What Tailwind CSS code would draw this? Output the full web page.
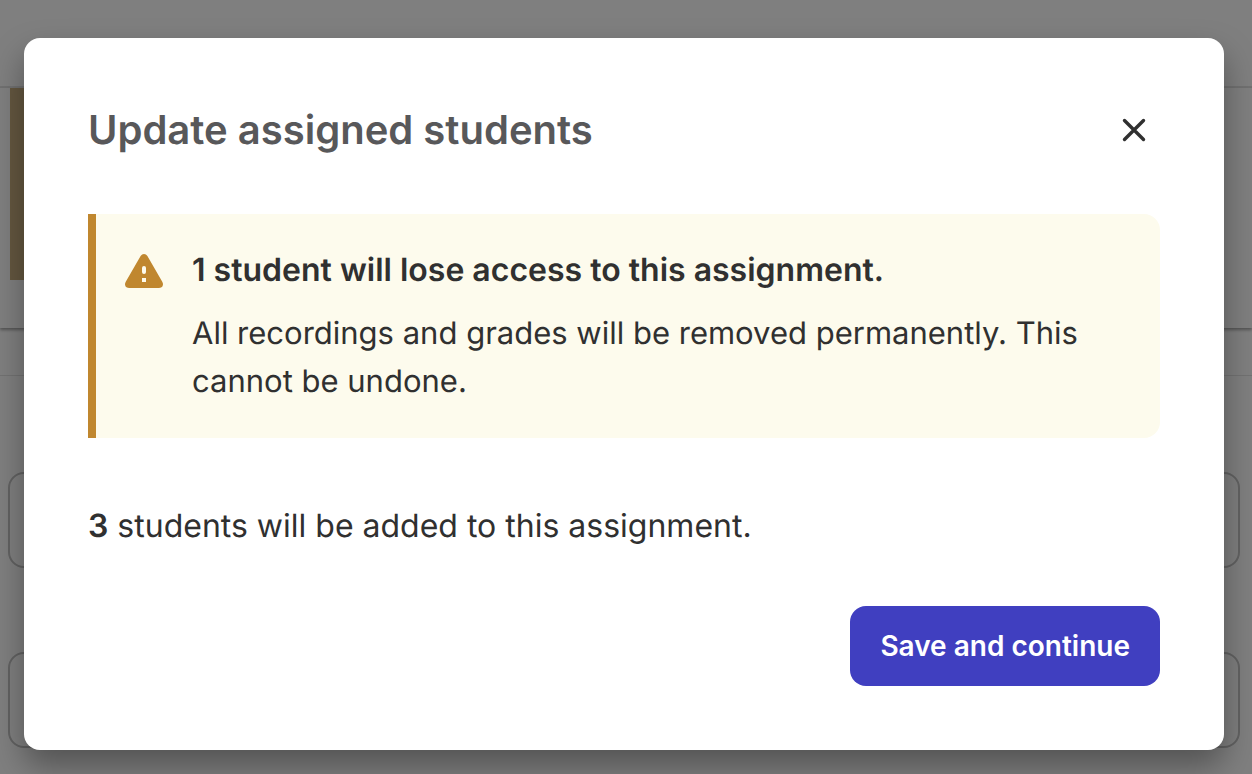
<!DOCTYPE html>
<html lang="en">
<head>
<meta charset="utf-8">
<meta name="viewport" content="width=device-width, initial-scale=1">
<title>Update assigned students</title>
<script src="https://cdn.jsdelivr.net/npm/@tailwindcss/browser@4"></script>
</head>
<body class="relative min-h-screen overflow-hidden bg-white font-['Inter',sans-serif] text-[#303030] antialiased [text-rendering:geometricPrecision]">
  <!-- Page behind the dialog -->
  <div aria-hidden="true" class="flex flex-col">
    <div class="h-22 border-b-2 border-[#e4e4e4]"></div>
    <div class="h-60 pl-2.5 shadow-[0_2px_3px_rgba(0,0,0,0.35)]">
      <div class="h-48 w-48 bg-[#c9ae80]"></div>
    </div>
    <div class="h-12 border-b border-[#e4e4e4]"></div>
    <div class="flex flex-col gap-21 px-2 pr-3 pt-24">
      <div class="h-24 rounded-2xl border-2 border-[#c4c4c4]"></div>
      <div class="h-24 rounded-2xl border-2 border-[#c4c4c4]"></div>
    </div>
  </div>

  <div class="absolute inset-0 bg-black/50 pt-[38px] pr-7 pb-6 pl-6">
    <section role="dialog" aria-modal="true" aria-labelledby="dialog-title" class="flex flex-col rounded-2xl bg-white p-16 shadow-[0_16px_32px_rgba(0,0,0,0.35)]">
      <header class="flex items-center justify-between pr-2">
        <h1 id="dialog-title" class="text-[40px] leading-14 font-semibold text-[#58585a]">Update assigned students</h1>
        <button type="button" aria-label="Close" class="flex size-9 items-center justify-center">
          <svg class="size-6" viewBox="0 0 24 24" fill="none" stroke="#303030" stroke-width="3.4" stroke-linecap="round"><path d="M2.5 2.5l19 19M21.5 2.5l-19 19"/></svg>
        </button>
      </header>

      <div role="alert" class="mt-14 flex gap-7 rounded-r-2xl border-l-8 border-[#c0872f] bg-[#fdfbed] py-8 pr-8 pl-7">
        <svg class="mt-2 h-[34px] w-10 shrink-0" viewBox="0 0 40 34" aria-hidden="true">
          <path fill="#c0872f" d="M16.6 2.1Q17.8 0 20 0t3.4 2.1L38.4 28Q39.7 30.4 38.6 32.2 37.5 34 35 34H5Q2.5 34 1.4 32.2 .3 30.4 1.6 28Z"/>
          <rect x="18" y="12" width="4" height="8" rx="2" fill="#fdfbed"/>
          <rect x="18" y="24" width="4" height="4" fill="#fdfbed"/>
        </svg>
        <div class="text-[32px] leading-12">
          <h2 class="font-semibold">1 student will lose access to this assignment.</h2>
          <p class="mt-4 text-[31px]">All recordings and grades will be removed permanently. This cannot be undone.</p>
        </div>
      </div>

      <p class="mt-16 text-[32px] leading-12"><strong class="font-semibold">3</strong> students will be added to this assignment.</p>

      <button type="button" class="mt-14 h-20 self-end rounded-2xl bg-[#403fc0] px-[30px] text-[28px] font-semibold text-white">Save and continue</button>
    </section>
  </div>
</body>
</html>
